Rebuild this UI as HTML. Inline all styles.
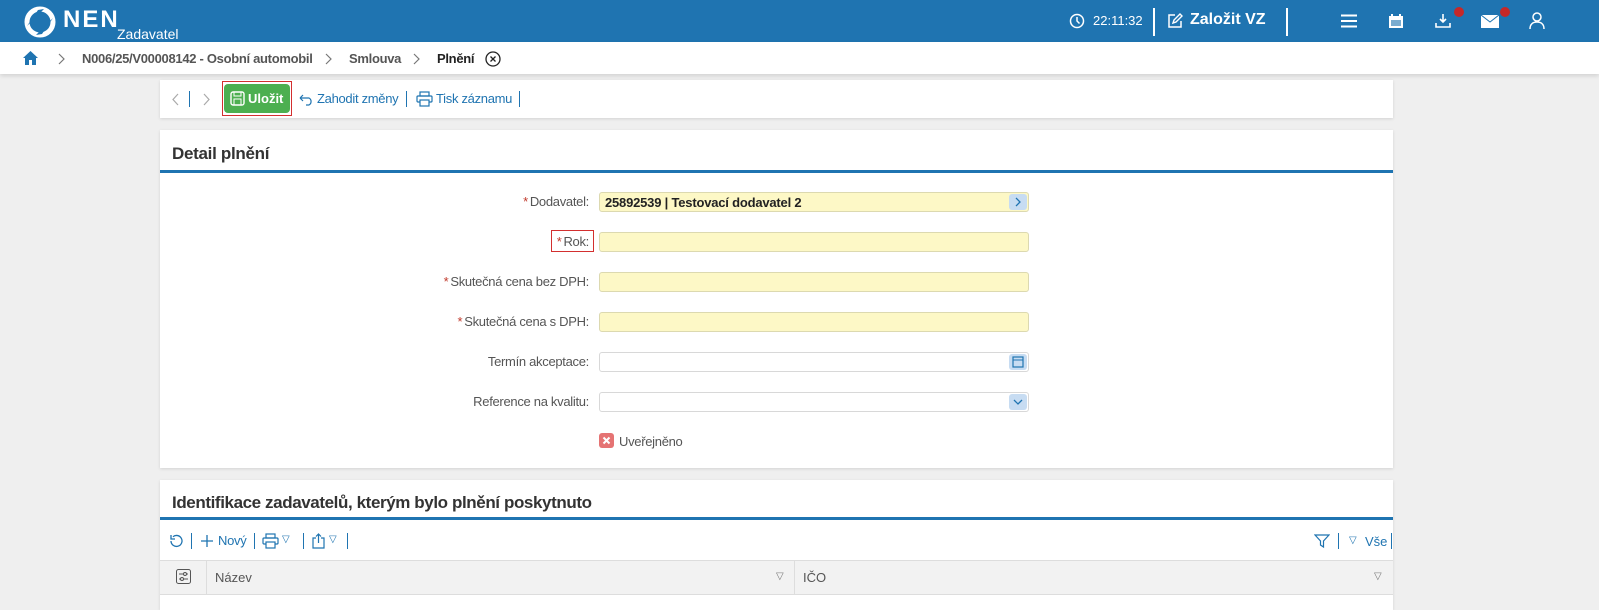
<!DOCTYPE html>
<html><head><meta charset="utf-8"><style>
*{box-sizing:border-box;margin:0;padding:0}
body{width:1599px;height:607px;overflow:hidden;background:#efefef;font-family:"Liberation Sans",sans-serif;font-size:13px;color:#333;position:relative}
.abs{position:absolute}
.hdr{left:0;top:0;width:1599px;height:42px;background:#1f74b1;color:#fff}
.bc{left:0;top:42px;width:1599px;height:32px;background:#fff;box-shadow:0 2px 4px rgba(0,0,0,.12)}
.bc span{position:absolute;top:9px;font-size:13px;font-weight:bold;color:#555;letter-spacing:-.3px}
.panel{background:#fff;box-shadow:0 1px 3px rgba(0,0,0,.12)}
.lbl{position:absolute;right:1010px;font-size:13px;color:#555;letter-spacing:-.3px;text-align:right;white-space:nowrap}
.lbl b{color:#c0392b;font-weight:normal;margin-right:2px}
.inp{position:absolute;left:599px;width:430px;height:20px;border:1px solid #dcd9b0;border-radius:3px;background:#fdf8c6}
.inp.w{background:#fff;border-color:#d8d8d8}
.btnr{position:absolute;right:1px;top:1px;width:18px;height:16px;background:#c7dcf2;border-radius:3px}
.blue{color:#1f74b1}
.sep{position:absolute;width:1px;background:#1f74b1}
</style></head><body>
<div class="abs hdr">
 <svg class="abs" style="left:24px;top:6px" width="32" height="32" viewBox="0 0 32 32"><circle cx="16" cy="16" r="13" fill="none" stroke="#fff" stroke-width="5"/><path d="M3 20 L14 4 L20 3 Z M29 12 L18 28 L12 29Z" fill="#1f74b1"/></svg>
 <div class="abs" style="left:63px;top:6px;font-size:24px;font-weight:bold;letter-spacing:2px">NEN</div>
 <div class="abs" style="left:117px;top:26px;font-size:14px">Zadavatel</div>
 <svg class="abs" style="left:1069px;top:13px" width="16" height="16" viewBox="0 0 16 16"><circle cx="8" cy="8" r="6.5" fill="none" stroke="#fff" stroke-width="1.5"/><path d="M8 4v4l2.5 2.5" stroke="#fff" stroke-width="1.5" fill="none"/></svg>
 <div class="abs" style="left:1093px;top:13px;font-size:13px">22:11:32</div>
 <div class="abs" style="left:1153px;top:8px;width:2px;height:28px;background:#fff"></div>
 <svg class="abs" style="left:1167px;top:12px" width="17" height="17" viewBox="0 0 17 17"><path d="M8 3H2v12h12V9" fill="none" stroke="#fff" stroke-width="1.5"/><path d="M6 11l1-3 6-6 2 2-6 6z" fill="none" stroke="#fff" stroke-width="1.4"/></svg>
 <div class="abs" style="left:1190px;top:11px;font-size:16px;font-weight:bold">Založit VZ</div>
 <div class="abs" style="left:1286px;top:8px;width:2px;height:28px;background:#fff"></div>
 <svg class="abs" style="left:1341px;top:14px" width="16" height="14"><path d="M0 1.5h16M0 7h16M0 12.5h16" stroke="#fff" stroke-width="2"/></svg>
 <svg class="abs" style="left:1388px;top:13px" width="16" height="16" viewBox="0 0 16 16"><rect x="1" y="3" width="14" height="12" fill="#fff"/><rect x="3" y="7" width="10" height="6" fill="#1f74b1" opacity=".6"/><path d="M4 1v4M12 1v4" stroke="#fff" stroke-width="2"/></svg>
 <svg class="abs" style="left:1435px;top:13px" width="16" height="16" viewBox="0 0 16 16"><path d="M8 1v8M5 6l3 3 3-3M1 10v4h14v-4" fill="none" stroke="#fff" stroke-width="1.6"/></svg>
 <div class="abs" style="left:1454px;top:7px;width:10px;height:10px;border-radius:5px;background:#c62828"></div>
 <svg class="abs" style="left:1481px;top:15px" width="18" height="13"><rect width="18" height="13" fill="#fff"/><path d="M0 0l9 7 9-7" stroke="#1f74b1" fill="none"/></svg>
 <div class="abs" style="left:1500px;top:7px;width:10px;height:10px;border-radius:5px;background:#c62828"></div>
 <svg class="abs" style="left:1529px;top:12px" width="16" height="18" viewBox="0 0 16 18"><circle cx="8" cy="5" r="4" fill="none" stroke="#fff" stroke-width="1.5"/><path d="M1 17c0-5 3-7 7-7s7 2 7 7" fill="none" stroke="#fff" stroke-width="1.5"/></svg>
</div>
<div class="abs bc">
 <svg class="abs" style="left:22px;top:8px" width="17" height="16" viewBox="0 0 17 16"><path d="M8.5 1L1 8h2v7h4v-5h3v5h4V8h2z" fill="#1f74b1"/></svg>
 <svg class="abs" style="left:58px;top:11px" width="8" height="12"><path d="M1 1l5 5-5 5" fill="none" stroke="#777" stroke-width="1.2"/></svg>
 <span style="left:82px">N006/25/V00008142 - Osobní automobil</span>
 <svg class="abs" style="left:325px;top:11px" width="8" height="12"><path d="M1 1l5 5-5 5" fill="none" stroke="#777" stroke-width="1.2"/></svg>
 <span style="left:349px">Smlouva</span>
 <svg class="abs" style="left:413px;top:11px" width="8" height="12"><path d="M1 1l5 5-5 5" fill="none" stroke="#777" stroke-width="1.2"/></svg>
 <span style="left:437px;color:#222">Plnění</span>
 <svg class="abs" style="left:485px;top:9px" width="16" height="16"><circle cx="8" cy="8" r="7" fill="none" stroke="#222" stroke-width="1.3"/><path d="M5.5 5.5l5 5M10.5 5.5l-5 5" stroke="#222" stroke-width="1.3"/></svg>
</div>
<div class="abs panel" style="left:160px;top:80px;width:1233px;height:38px">
 <svg class="abs" style="left:12px;top:13px" width="8" height="13"><path d="M6 1L1 6.5 6 12" fill="none" stroke="#aaa" stroke-width="1.2"/></svg>
 <div class="sep" style="left:29px;top:11px;height:16px"></div>
 <svg class="abs" style="left:43px;top:13px" width="8" height="13"><path d="M1 1l5 5.5L1 12" fill="none" stroke="#aaa" stroke-width="1.2"/></svg>
 <div class="abs" style="left:62px;top:1px;width:70px;height:35px;border:1px solid #d32f2f"></div>
 <div class="abs" style="left:64px;top:4px;width:66px;height:29px;background:#4caf50;border-radius:4px;color:#fff;font-weight:bold;font-size:13px;line-height:29px;padding-left:24px">Uložit</div>
 <svg class="abs" style="left:70px;top:11px" width="15" height="15"><rect x="1" y="1" width="13" height="13" rx="2" fill="none" stroke="#fff" stroke-width="1.4"/><rect x="4" y="1" width="7" height="4" fill="none" stroke="#fff"/><rect x="4" y="8" width="7" height="6" fill="none" stroke="#fff"/></svg>
 <svg class="abs" style="left:138px;top:13px" width="17" height="13"><path d="M2 5h9a4 4 0 0 1 0 7H8M2 5l3-3M2 5l3 3" fill="none" stroke="#1f74b1" stroke-width="1.2"/></svg>
 <div class="abs blue" style="left:157px;top:11px;letter-spacing:-.3px">Zahodit změny</div>
 <div class="sep" style="left:246px;top:11px;height:16px"></div>
 <svg class="abs" style="left:256px;top:11px" width="17" height="16"><rect x="4" y="1" width="9" height="4" fill="none" stroke="#1f74b1" stroke-width="1.2"/><rect x="1" y="5" width="15" height="6" rx="1" fill="none" stroke="#1f74b1" stroke-width="1.2"/><rect x="4" y="9" width="9" height="6" fill="#fff" stroke="#1f74b1" stroke-width="1.2"/></svg>
 <div class="abs blue" style="left:276px;top:11px;letter-spacing:-.3px">Tisk záznamu</div>
 <div class="sep" style="left:359px;top:11px;height:16px"></div>
</div>
<div class="abs panel" style="left:160px;top:130px;width:1233px;height:338px">
 <div class="abs" style="left:12px;top:14px;font-size:17px;font-weight:bold;color:#333;letter-spacing:-.3px">Detail plnění</div>
 <div class="abs" style="left:0;top:40px;width:1233px;height:3px;background:#1f74b1"></div>
</div>
<div class="lbl" style="top:194px"><b>*</b>Dodavatel:</div>
<div class="inp" style="top:192px"><span style="position:absolute;left:5px;top:2px;font-weight:bold;color:#222;letter-spacing:-.2px">25892539 | Testovací dodavatel 2</span><div class="btnr"><svg width="18" height="16"><path d="M7 4l4 4-4 4" fill="none" stroke="#1f74b1" stroke-width="1.3"/></svg></div></div>
<div class="abs" style="left:551px;top:230px;width:43px;height:22px;border:1px solid #d32f2f"></div>
<div class="lbl" style="top:234px"><b>*</b>Rok:</div>
<div class="inp" style="top:232px"></div>
<div class="lbl" style="top:274px"><b>*</b>Skutečná cena bez DPH:</div>
<div class="inp" style="top:272px"></div>
<div class="lbl" style="top:314px"><b>*</b>Skutečná cena s DPH:</div>
<div class="inp" style="top:312px"></div>
<div class="lbl" style="top:354px">Termín akceptace:</div>
<div class="inp w" style="top:352px"><div class="btnr"><svg width="18" height="16"><rect x="4" y="3" width="10" height="10" fill="none" stroke="#1f74b1" stroke-width="1.2"/><path d="M4 6h10" stroke="#1f74b1"/></svg></div></div>
<div class="lbl" style="top:394px">Reference na kvalitu:</div>
<div class="inp w" style="top:392px"><div class="btnr"><svg width="18" height="16"><path d="M5 6l4 4 4-4" fill="none" stroke="#1f74b1" stroke-width="1.3"/></svg></div></div>
<div class="abs" style="left:599px;top:433px;width:15px;height:15px;background:#e57373;border-radius:3px"><svg width="15" height="15"><path d="M4.5 4.5l6 6M10.5 4.5l-6 6" stroke="#fff" stroke-width="2"/></svg></div>
<div class="abs" style="left:619px;top:434px;color:#555;letter-spacing:-.3px">Uveřejněno</div>
<div class="abs panel" style="left:160px;top:480px;width:1233px;height:130px">
 <div class="abs" style="left:12px;top:13px;font-size:17px;font-weight:bold;color:#333;letter-spacing:-.4px">Identifikace zadavatelů, kterým bylo plnění poskytnuto</div>
 <div class="abs" style="left:0;top:37px;width:1233px;height:3px;background:#1f74b1"></div>
 <svg class="abs" style="left:8px;top:53px" width="16" height="16"><path d="M3 8a5.5 5.5 0 1 0 2-4.3M3 2v4h4" fill="none" stroke="#1f74b1" stroke-width="1.3"/></svg>
 <div class="sep" style="left:31px;top:53px;height:16px"></div>
 <svg class="abs" style="left:40px;top:54px" width="14" height="14"><path d="M7 1v12M1 7h12" stroke="#1f74b1" stroke-width="1.3"/></svg>
 <div class="abs blue" style="left:58px;top:53px;letter-spacing:-.3px">Nový</div>
 <div class="sep" style="left:94px;top:53px;height:16px"></div>
 <svg class="abs" style="left:102px;top:53px" width="17" height="16"><rect x="4" y="1" width="9" height="4" fill="none" stroke="#1f74b1" stroke-width="1.2"/><rect x="1" y="5" width="15" height="6" rx="1" fill="none" stroke="#1f74b1" stroke-width="1.2"/><rect x="4" y="9" width="9" height="6" fill="#fff" stroke="#1f74b1" stroke-width="1.2"/></svg>
 <div class="abs blue" style="left:122px;top:54px;font-size:10px">▽</div>
 <div class="sep" style="left:143px;top:53px;height:16px"></div>
 <svg class="abs" style="left:151px;top:52px" width="15" height="17"><path d="M5 6H2v10h11V6h-3M7.5 11V2M5 4.5l2.5-2.5 2.5 2.5" fill="none" stroke="#1f74b1" stroke-width="1.2"/></svg>
 <div class="abs blue" style="left:169px;top:54px;font-size:10px">▽</div>
 <div class="sep" style="left:187px;top:53px;height:16px"></div>
 <svg class="abs" style="left:1154px;top:53px" width="16" height="16"><path d="M1 2h14l-5.5 6v6l-3-2V8z" fill="none" stroke="#1f74b1" stroke-width="1.2"/></svg>
 <div class="sep" style="left:1178px;top:53px;height:16px"></div>
 <div class="abs blue" style="left:1189px;top:55px;font-size:10px">▽</div>
 <div class="abs blue" style="left:1205px;top:54px">Vše</div>
 <div class="sep" style="left:1231px;top:53px;height:16px"></div>
 <div class="abs" style="left:0;top:80px;width:1233px;height:35px;background:#f2f2f2;border-top:1px solid #ddd;border-bottom:1px solid #ddd"></div>
 <svg class="abs" style="left:16px;top:89px" width="15" height="15"><rect x=".5" y=".5" width="14" height="14" rx="2" fill="none" stroke="#555"/><path d="M3 5h9M3 10h9" stroke="#555"/><circle cx="9" cy="5" r="1.5" fill="#f2f2f2" stroke="#555"/><circle cx="6" cy="10" r="1.5" fill="#f2f2f2" stroke="#555"/></svg>
 <div class="abs" style="left:46px;top:80px;width:1px;height:35px;background:#ddd"></div>
 <div class="abs" style="left:55px;top:90px;color:#555">Název</div>
 <div class="abs" style="left:616px;top:91px;color:#777;font-size:10px">▽</div>
 <div class="abs" style="left:634px;top:80px;width:1px;height:35px;background:#ddd"></div>
 <div class="abs" style="left:643px;top:90px;color:#555">IČO</div>
 <div class="abs" style="left:1214px;top:91px;color:#777;font-size:10px">▽</div>
</div>
</body></html>
